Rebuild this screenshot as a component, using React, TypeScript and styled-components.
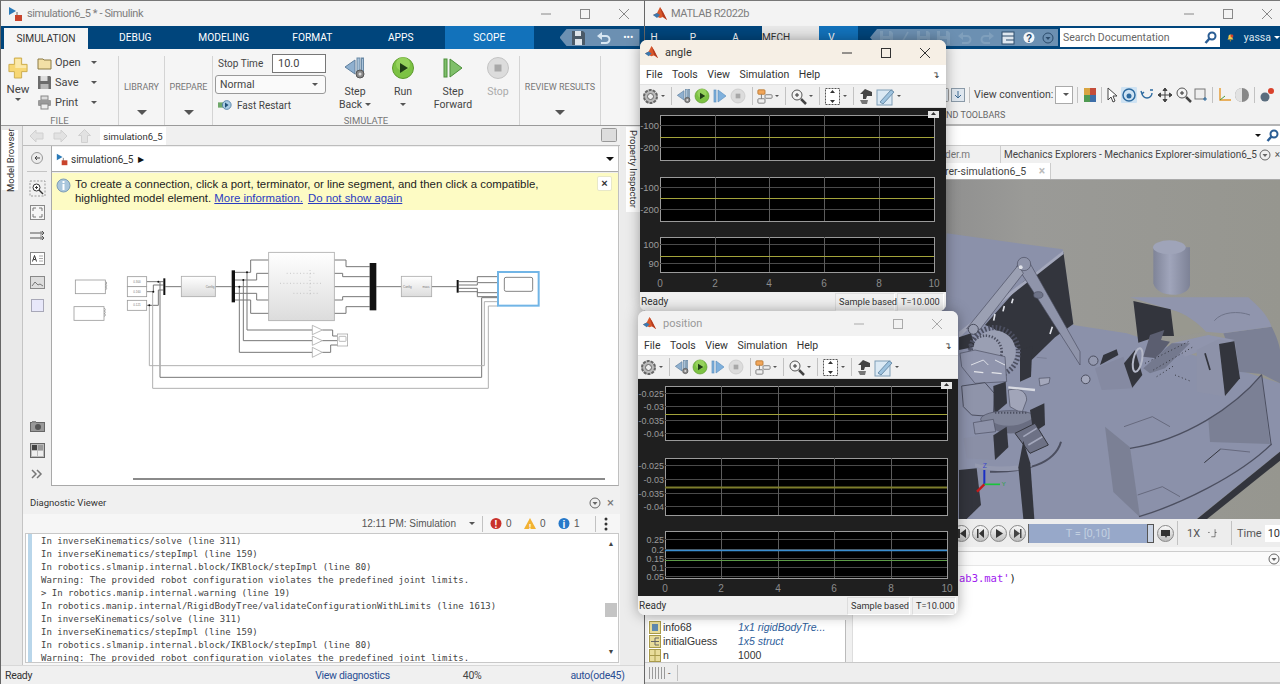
import * as React from 'react'
import styled, { createGlobalStyle } from 'styled-components'

const UI = `Roboto, "Noto Sans", "Liberation Sans", sans-serif`
const ARIAL = `"Liberation Sans", Arial, sans-serif`
const MONO = `"DejaVu Sans Mono", "Liberation Mono", monospace`

const GlobalStyle = createGlobalStyle`
  html, body { margin: 0; padding: 0; width: 1280px; height: 684px; overflow: hidden; background: #2a2a2a; }
  #root { width: 1280px; height: 684px; }
  * { box-sizing: border-box; }
`

const Desktop = styled.div`
  position: relative;
  width: 1280px;
  height: 684px;
  overflow: hidden;
  font-family: ${UI};
  color: #444;
`

const AppWindow = styled.div<{ $left: number; $width: number }>`
  position: absolute;
  top: 0;
  left: ${p => p.$left}px;
  width: ${p => p.$width}px;
  height: 684px;
  display: flex;
  flex-direction: column;
  background: #f0f0f0;
  border-left: 1px solid #666;
  border-top: 1px solid #777;
`

const TitleBar = styled.div<{ $padRight: number }>`
  height: 25px;
  flex: none;
  display: flex;
  align-items: center;
  gap: 3px;
  padding: 0 ${p => p.$padRight}px 0 7px;
  background: #f3f3f3;
  color: #7d7d7d;
  font-size: 11px;
  letter-spacing: -0.4px;
`

const TitleText = styled.span`
  flex: 1;
  white-space: nowrap;
`

const WinControls = styled.div<{ $gap: number; $color?: string }>`
  display: flex;
  align-items: center;
  gap: ${p => p.$gap}px;
  color: ${p => p.$color ?? '#888'};
`

const TabBar = styled.div<{ $padLeft: number }>`
  height: 23px;
  flex: none;
  display: flex;
  align-items: stretch;
  background: #00457c;
  padding-left: ${p => p.$padLeft}px;
`

const RibbonTab = styled.div<{ $kind?: 'active' | 'context' }>`
  width: ${p => (p.$kind === 'active' ? 84 : 88.5)}px;
  flex: none;
  display: flex;
  align-items: center;
  justify-content: center;
  font-size: 10.2px;
  margin-top: ${p => (p.$kind === 'active' ? 2 : 0)}px;
  margin-right: ${p => (p.$kind === 'active' ? 3 : 0)}px;
  color: ${p => (p.$kind === 'active' ? '#333' : '#fff')};
  background: ${p => (p.$kind === 'active' ? '#f5f5f5' : p.$kind === 'context' ? '#1272bb' : 'transparent')};
`

const QuickAccess = styled.div<{ $left: number; $width: number }>`
  margin-left: ${p => p.$left}px;
  width: ${p => p.$width}px;
  flex: none;
  margin-top: 3px;
  margin-bottom: 3px;
  padding-left: 6px;
  display: flex;
  align-items: center;
  justify-content: space-around;
  background: #6c90b2;
  clip-path: polygon(7px 0, 100% 0, 100% 100%, 7px 100%, 0 50%);
`

const Ribbon = styled.div`
  height: 77px;
  flex: none;
  display: flex;
  background: #f5f5f5;
  border-bottom: 1px solid #9a9a9a;
`

const RibbonSection = styled.div<{ $width: number }>`
  width: ${p => p.$width}px;
  flex: none;
  margin-top: 7px;
  display: flex;
  flex-direction: column;
  border-right: 1px solid #d4d4d4;
`

const SectionBody = styled.div`
  flex: 1;
  display: flex;
  min-height: 0;
`

const SectionLabel = styled.div`
  height: 13px;
  flex: none;
  text-align: center;
  font-size: 9.5px;
  color: #777;
  line-height: 17px;
`

const Collapsed = styled.div`
  flex: 1;
  display: flex;
  flex-direction: column;
  align-items: center;
  padding-top: 26px;
  gap: 18px;
  font-size: 9px;
  color: #777;
  white-space: nowrap;
`

const Caret = styled.span<{ $size?: number; $color?: string; $top?: number }>`
  display: inline-block;
  width: 0;
  height: 0;
  flex: none;
  margin-top: ${p => p.$top ?? 0}px;
  border-left: ${p => p.$size ?? 3}px solid transparent;
  border-right: ${p => p.$size ?? 3}px solid transparent;
  border-top: ${p => p.$size ?? 3}px solid ${p => p.$color ?? '#555'};
`

const NewButton = styled.div`
  width: 34px;
  display: flex;
  flex-direction: column;
  align-items: center;
  padding-top: 1px;
  font-size: 11.5px;
  gap: 2px;
`

const FileList = styled.div`
  width: 70px;
  margin: -2px 0 0 2px;
  display: flex;
  flex-direction: column;
  gap: 3px;
`

const FileRow = styled.div`
  height: 17px;
  display: flex;
  align-items: center;
  gap: 3px;
  font-size: 11px;
  span:nth-child(2) { width: 33px; }
`

const RunColumn = styled.div`
  width: 111px;
  margin: -2px 0 0 2px;
  display: flex;
  flex-direction: column;
  gap: 2px;
`

const StopTimeRow = styled.div`
  height: 19px;
  display: flex;
  align-items: center;
  padding-left: 3px;
  font-size: 10px;
  justify-content: space-between;
`

const StopInput = styled.div`
  width: 54px;
  height: 19px;
  border: 1px solid #777;
  background: #fff;
  padding-left: 5px;
  line-height: 17px;
  font-size: 11px;
`

const ModeSelect = styled.div`
  height: 19px;
  border: 1px solid #999;
  border-radius: 3px;
  background: #fafafa;
  display: flex;
  align-items: center;
  justify-content: space-between;
  padding: 0 7px 0 4px;
  font-size: 10.5px;
`

const FastRestart = styled.div`
  display: flex;
  align-items: center;
  gap: 5px;
  font-size: 10px;
  padding: 2px 0 0 3px;
`

const BigButton = styled.div<{ $width: number; $left?: number; $muted?: boolean }>`
  width: ${p => p.$width}px;
  margin-left: ${p => p.$left ?? 0}px;
  display: flex;
  flex-direction: column;
  align-items: center;
  font-size: 10.5px;
  line-height: 13px;
  text-align: center;
  color: ${p => (p.$muted ? '#aaa' : '#444')};
  svg { margin-bottom: 5px; }
`

const Inline = styled.span<{ $gap?: number }>`
  display: inline-flex;
  align-items: center;
  gap: ${p => p.$gap ?? 3}px;
`

const SimMain = styled.div`
  flex: 1;
  display: flex;
  min-height: 0;
`

const SideStrip = styled.div`
  width: 22px;
  flex: none;
  background: #e9e9e9;
  border-right: 1px solid #c4c4c4;
  padding: 4px 3px 0 1px;
`

const VerticalTab = styled.div<{ $width: number; $height: number; $flip?: boolean }>`
  width: ${p => p.$width}px;
  height: ${p => p.$height}px;
  background: #fff;
  display: flex;
  align-items: center;
  justify-content: center;
  font-size: 9.5px;
  writing-mode: vertical-rl;
  white-space: nowrap;
  color: #333;
  transform: ${p => (p.$flip ? 'rotate(180deg)' : 'none')};
`

const Center = styled.div`
  width: 597px;
  flex: none;
  display: flex;
  flex-direction: column;
`

const EditorTabs = styled.div`
  height: 20px;
  flex: none;
  display: flex;
  align-items: flex-end;
  background: #f0f0f0;
  padding-left: 6px;
  gap: 9px;
  border-bottom: 1px solid #bdbdbd;
  svg { margin-bottom: 2px; }
`

const EditorTab = styled.div`
  width: 66px;
  height: 18px;
  background: #fff;
  font-size: 9.5px;
  text-align: center;
  line-height: 20px;
  color: #333;
  margin: 0 auto 0 -1px;
`

const KeyboardSlot = styled.span`
  width: 3px;
  margin-left: -9px;
`

const EditorRow = styled.div`
  flex: 1;
  display: flex;
  min-height: 0;
`

const Palette = styled.div`
  width: 28px;
  flex: none;
  display: flex;
  flex-direction: column;
  align-items: center;
  padding-top: 5px;
  background: #f0f0f0;
`

const PaletteGroup = styled.div`
  display: grid;
  grid-auto-rows: 23.4px;
  align-items: center;
  justify-items: center;
  padding-top: 5px;
  margin-top: 6px;
  border-top: 1px solid #c4c4c4;
  width: 20px;
`

const PaletteBottom = styled.div`
  margin-top: auto;
  display: grid;
  grid-auto-rows: 24px;
  align-items: center;
  justify-items: center;
`

const EditorColumn = styled.div`
  width: 568px;
  flex: none;
  display: flex;
  flex-direction: column;
  border-left: 1px solid #a9a9a9;
  border-bottom: 1px solid #a9a9a9;
  border-right: 1px solid #c0c0c0;
`

const AddressBar = styled.div`
  height: 25px;
  margin-top: 1px;
  flex: none;
  display: flex;
  align-items: center;
  background: #fff;
  padding: 0 4px 0 4px;
  gap: 2px;
  font-size: 10px;
  color: #333;
  border-bottom: 1px solid #aaa;
`

const AddressArrow = styled.span`
  font-size: 8px;
  margin-left: 3px;
  margin-right: auto;
  color: #111;
`

const Hint = styled.div`
  height: 38px;
  flex: none;
  display: flex;
  background: #fdfbc4;
  border-top: 1px solid #eee;
  padding: 5px 6px 0 4px;
  font-family: ${ARIAL};
  font-size: 11.4px;
  line-height: 13.5px;
  color: #222;
`

const HintBody = styled.div`
  flex: 1;
  padding-left: 4px;
  white-space: nowrap;
`

const HintLink = styled.span`
  color: #2a3cc0;
  text-decoration: underline;
  margin-right: 5px;
`

const CloseBox = styled.div`
  width: 15px;
  height: 15px;
  margin-top: -2px;
  background: #fff;
  border: 1px solid #e8e8c8;
  border-radius: 2px;
  font-size: 11px;
  line-height: 13px;
  text-align: center;
  font-weight: bold;
  color: #333;
`

const CanvasArea = styled.div`
  flex: 1;
  display: flex;
  flex-direction: column;
  background: #fff;
  padding-top: 20px;
  svg { display: block; flex: none; margin-left: -2px; }
`

const CanvasScroll = styled.div`
  margin: auto 13px 5px 81px;
  height: 2px;
  background: #8a8a8a;
`

const Diagnostic = styled.div`
  height: 179px;
  flex: none;
  display: flex;
  flex-direction: column;
  background: #f7f7f7;
`

const DiagHeader = styled.div`
  height: 28px;
  flex: none;
  display: flex;
  align-items: center;
  justify-content: space-between;
  padding: 5px 6px 0 7px;
  font-size: 9.5px;
  color: #333;
  background: #f0f0f0;
`

const DiagTools = styled.div`
  height: 19px;
  flex: none;
  display: flex;
  align-items: center;
  justify-content: flex-end;
  gap: 4px;
  font-size: 10px;
  color: #555;
  padding-right: 11px;
  background: #f6f6f6;
  font-family: ${ARIAL};
`

const ToolDivider = styled.span<{ $height?: number; $margin?: number }>`
  width: 1px;
  height: ${p => p.$height ?? 16}px;
  flex: none;
  background: #c2c2c2;
  margin: 0 ${p => p.$margin ?? 3}px;
`

const Count = styled.span`
  width: 14px;
`

const DismissGlyph = styled.span`
  font-size: 13px;
  color: #777;
`

const LogBox = styled.div`
  height: 130px;
  flex: none;
  display: flex;
  margin: 0 1px 0 2px;
  background: #fff;
  border: 1px solid #c8c8c8;
  overflow: hidden;
`

const LogStripe = styled.div`
  width: 4px;
  flex: none;
  margin-left: 2px;
  background: #b9d6ea;
`

const LogLines = styled.div`
  flex: 1;
  padding: 0 0 0 9px;
  margin-top: 1px;
  font-family: ${MONO};
  font-size: 9px;
  line-height: 13px;
  color: #444;
  white-space: pre;
`

const LogScroll = styled.div`
  width: 14px;
  flex: none;
  display: flex;
  flex-direction: column;
  align-items: center;
  padding: 6px 0;
  font-size: 7px;
  color: #444;
`

const LogThumb = styled.div`
  width: 12px;
  height: 14px;
  flex: none;
  margin: 55px 0 auto;
  background: #c4c4c4;
`

const PropertyStrip = styled.div`
  flex: 1;
  padding: 1px 0 0 6px;
  background: #ececec;
`

const StatusBar = styled.div`
  height: 19px;
  flex: none;
  display: flex;
  align-items: center;
  font-size: 10.5px;
  letter-spacing: -0.3px;
  color: #333;
  padding-left: 4px;
  background: #f0f0f0;
  border-top: 1px solid #d8d8d8;
`

const StatusItem = styled.span<{ $left: number; $link?: boolean }>`
  margin-left: ${p => p.$left}px;
  color: ${p => (p.$link ? '#2b4f94' : '#444')};
  white-space: nowrap;
`

/* MATLAB desktop */

const MatTab = styled.div<{ $width: number; $inset?: number; $kind?: 'active' | 'context' }>`
  width: ${p => p.$width}px;
  flex: none;
  padding-right: ${p => p.$inset ?? 0}px;
  font-size: 10px;
  display: flex;
  align-items: center;
  justify-content: ${p => (p.$kind === 'active' ? 'flex-start' : 'center')};
  color: ${p => (p.$kind === 'active' ? '#333' : '#fff')};
  background: ${p => (p.$kind === 'active' ? '#e8e8e8' : p.$kind === 'context' ? '#1272bb' : 'transparent')};
`

const SearchBox = styled.div`
  width: 160px;
  height: 19px;
  flex: none;
  margin: 2px 0 0 2px;
  background: #fff;
  display: flex;
  align-items: center;
  justify-content: space-between;
  padding: 0 3px;
  font-size: 10.5px;
  color: #666;
`

const UserArea = styled.div`
  flex: 1;
  display: flex;
  align-items: center;
  gap: 10px;
  padding-left: 7px;
  color: #dfe7ef;
  font-size: 10.5px;
  white-space: nowrap;
  overflow: hidden;
`

const MatRibbon = styled.div`
  height: 77px;
  flex: none;
  background: #f2f2f2;
  border-bottom: 2px solid #b5b5b5;
  padding: 36px 0 0 290px;
  display: flex;
  flex-direction: column;
`

const ViewRow = styled.div`
  height: 19px;
  display: flex;
  align-items: center;
  gap: 2px;
  font-size: 10.5px;
  color: #444;
  white-space: nowrap;
`

const ViewSelect = styled.div`
  width: 18px;
  height: 18px;
  flex: none;
  background: #fff;
  border: 1px solid #aaa;
  display: flex;
  align-items: center;
  justify-content: flex-end;
  padding-right: 3px;
`

const ToolbarsLabel = styled.div`
  margin: 6px 0 0 11px;
  font-size: 9px;
  color: #666;
`

const PathRow = styled.div`
  height: 20px;
  flex: none;
  display: flex;
  align-items: center;
  justify-content: flex-end;
  gap: 5px;
  padding-right: 1px;
  background: #fff;
  border-bottom: 1px solid #ccc;
`

const DocTabs = styled.div`
  height: 17px;
  flex: none;
  display: flex;
  align-items: center;
  background: #f0f0f0;
  font-size: 10px;
  color: #555;
  padding-left: 300px;
  white-space: nowrap;
`

const DocName = styled.span`
  width: 56px;
  flex: none;
  height: 17px;
  line-height: 17px;
  border-right: 1px solid #ccc;
  color: #777;
`

const DocTitle = styled.span`
  padding-left: 3px;
  flex: 1;
  color: #444;
`

const DocClose = styled.span`
  margin-left: 4px;
`

const ExplorerTabs = styled.div`
  height: 17px;
  flex: none;
  display: flex;
  padding-left: 300px;
  background: #f0f0f0;
  border-bottom: 1px solid #aaa;
  font-size: 10.5px;
  color: #444;
`

const ExplorerTab = styled.div`
  width: 106px;
  background: #fff;
  border-right: 1px solid #ccc;
  display: flex;
  align-items: center;
  justify-content: space-between;
  padding-right: 5px;
  white-space: nowrap;
  span { color: #bbb; font-size: 12px; font-weight: bold; }
`

const Scene = styled.div`
  height: 339px;
  flex: none;
  background: #979797;
  svg { display: block; }
`

const PlayBar = styled.div`
  height: 28px;
  flex: none;
  display: flex;
  align-items: center;
  padding-left: 308px;
  background: #ededed;
  font-size: 11px;
  color: #555;
  white-space: nowrap;
`

const RoundBtn = styled.div<{ $after?: number }>`
  width: 17px;
  height: 17px;
  flex: none;
  margin-right: ${p => p.$after ?? 1.5}px;
  border-radius: 50%;
  background: linear-gradient(#fafafa, #bdbdbd);
  border: 1px solid #888;
  display: flex;
  align-items: center;
  justify-content: center;
`

const TimeSlider = styled.div`
  width: 126px;
  height: 19px;
  margin: 0 3px 0 1px;
  flex: none;
  display: flex;
  background: #97a8c9;
  border-left: 1px solid #666;
  color: #c2cfe0;
  font-size: 11px;
  line-height: 19px;
`

const SliderLabel = styled.span`
  flex: 1;
  text-align: center;
`

const SliderHandle = styled.span`
  width: 7px;
  background: #c9d3e4;
  border: 1px solid #555;
`

const RateLabel = styled.span`
  margin-left: 6px;
`

const RateGlyph = styled.svg`
  margin: 0 9px 0 7px;
`

const TimeLabel = styled.span`
  margin-left: 2px;
`

const TimeInput = styled.div`
  flex: 1;
  height: 17px;
  margin-left: 3px;
  background: #fff;
  padding-left: 3px;
  line-height: 17px;
  color: #333;
`

const LowerRow = styled.div`
  flex: 1;
  display: flex;
  min-height: 0;
  border-top: 4px solid #f7f7f7;
`

const Workspace = styled.div`
  width: 205px;
  flex: none;
  padding: 69px 0 0 3px;
  background: #f0f0f0;
  display: flex;
  flex-direction: column;
`

const VarTable = styled.div`
  flex: 1;
  width: 198px;
  background: #fff;
  border-bottom: 1px solid #999;
  border-right: 1px solid #bbb;
`

const VarRow = styled.div`
  height: 14px;
  display: flex;
  align-items: center;
  font-family: ${ARIAL};
  font-size: 10.5px;
  color: #333;
  padding-left: 1px;
  gap: 2px;
`

const VarName = styled.span`
  width: 73px;
  white-space: nowrap;
`

const VarValue = styled.span<{ $struct?: boolean }>`
  color: ${p => (p.$struct ? '#2d5d9a' : '#333')};
  font-style: ${p => (p.$struct ? 'italic' : 'normal')};
  white-space: nowrap;
`

const CommandPane = styled.div`
  flex: 1;
  display: flex;
  flex-direction: column;
  border-left: 1px solid #ddd;
  margin-left: 2px;
`

const CommandHead = styled.div`
  height: 15px;
  flex: none;
  display: flex;
  justify-content: flex-end;
  align-items: center;
  background: #fafafa;
  border-top: 1px solid #ccc;
  border-bottom: 1px solid #e6e6e6;
`

const CommandText = styled.div`
  flex: 1;
  background: #fff;
  padding: 6px 0 0 106px;
  font-family: ${MONO};
  font-size: 10.5px;
  color: #222;
  white-space: pre;
  em { color: #a020f0; font-style: normal; }
`

const MatStatus = styled.div`
  height: 22px;
  flex: none;
  display: flex;
  align-items: center;
  gap: 3px;
  padding-left: 4px;
  background: #eeeeee;
  border-top: 1px solid #c9c9c9;
  border-bottom: 2px solid #c9c9c9;
  font-size: 9px;
`

const Bars = styled.span`
  width: 16px;
  height: 12px;
  background: repeating-linear-gradient(90deg, #9a9a9a 0 1px, transparent 1px 3px);
`

/* Scope windows */

const ScopeWindow = styled.div<{ $left: number; $top: number; $width: number }>`
  position: absolute;
  left: ${p => p.$left}px;
  top: ${p => p.$top}px;
  width: ${p => p.$width}px;
  display: flex;
  flex-direction: column;
  border-radius: 7px;
  overflow: hidden;
  background: #f0f0f0;
  box-shadow: 0 0 14px rgba(0, 0, 0, 0.35);
`

const ScopeTitle = styled.div<{ $active: boolean }>`
  height: 25px;
  flex: none;
  display: flex;
  align-items: center;
  gap: 6px;
  padding: 0 15px 0 4px;
  background: ${p => (p.$active ? '#f6efe5' : '#f2f2f2')};
  color: ${p => (p.$active ? '#333' : '#999')};
  font-size: 11px;
`

const ScopeMenu = styled.div`
  height: 20px;
  flex: none;
  display: flex;
  align-items: center;
  gap: 9.5px;
  padding: 0 6px;
  background: #fff;
  font-size: 10.5px;
  color: #333;
  border-bottom: 1px solid #e2e2e2;
`

const MenuSpacer = styled.span`
  margin-left: auto;
  font-size: 9px;
`

const ScopeTools = styled.div`
  height: 23px;
  flex: none;
  display: flex;
  align-items: center;
  gap: 2px;
  padding: 0 2px;
  background: #f0f0f0;
  border-bottom: 1px solid #ddd;
`

const ScopeDivider = styled.span`
  width: 1px;
  height: 18px;
  flex: none;
  margin: 0 2px 0 4px;
  background: #c2c2c2;
`

const ScopeStatus = styled.div`
  height: 19px;
  flex: none;
  display: flex;
  align-items: center;
  gap: 2px;
  font-size: 9.2px;
  color: #333;
  padding: 0 2px 0 1px;
  background: #f0f0f0;
  white-space: nowrap;
`

const StatusLabel = styled.span`
  flex: 1;
  font-size: 10px;
`

const StatusCell = styled.span<{ $width: number }>`
  width: ${p => p.$width}px;
  flex: none;
  border: 1px solid #ddd;
  border-right-color: #fff;
  border-bottom-color: #fff;
  padding-left: 3px;
  line-height: 16px;
`

const ChartSvg = styled.svg`
  display: block;
  flex: none;
`

const NewLabel = styled.span`
  margin-top: 1px;
`

const DotsGlyph = styled.span`
  color: #fff;
  font-size: 10px;
`

const TimeSpacer = styled.span`
  width: 5px;
`

/* drawings */

const Minimize = () => (
  <svg width="12" height="12" viewBox="0 0 12 12"><path d="M1 6h10" stroke="currentColor" strokeWidth="1" /></svg>
)
const Maximize = () => (
  <svg width="12" height="12" viewBox="0 0 12 12"><rect x="1.5" y="1.5" width="9" height="9" fill="none" stroke="currentColor" /></svg>
)
const CloseX = () => (
  <svg width="12" height="12" viewBox="0 0 12 12"><path d="M1 1l10 10M11 1L1 11" stroke="currentColor" /></svg>
)

const SimulinkLogo = ({ size = 16 }: { size?: number }) => (
  <svg width={size} height={size} viewBox="0 0 16 16">
    <path d="M1 1l7 4-7 4z" fill="#2a7ab8" />
    <path d="M9 6v4" stroke="#666" />
    <rect x="7" y="9" width="7" height="6" fill="#c9442c" />
  </svg>
)

const MatlabLogo = ({ size = 16 }: { size?: number }) => (
  <svg width={size} height={size} viewBox="0 0 16 16">
    <path d="M1 9l4-2 3-6 3 5 4 8-4-3-3 1z" fill="#d9582b" />
    <path d="M1 9l4-2 3 2-3 3z" fill="#3b78ae" />
    <path d="M8 1l3 5 4 8-4-3z" fill="#b33a1f" />
  </svg>
)

const PlusIcon = () => (
  <svg width="20" height="22" viewBox="0 0 22 24">
    <path d="M7 1h8v7h6v8h-6v7H7v-7H1V8h6z" fill="#f7d774" stroke="#c9a94a" />
    <path d="M8 2h6v7h6v3H8z" fill="#fbe9ab" />
  </svg>
)

const FolderIcon = () => (
  <svg width="15" height="14" viewBox="0 0 15 14">
    <path d="M1 3h5l1 1h7v9H1z" fill="#f2dfa6" stroke="#8c7a44" />
  </svg>
)
const SaveIcon = () => (
  <svg width="15" height="15" viewBox="0 0 15 15">
    <path d="M1 1h12l1 1v12H1z" fill="#6c6c6c" />
    <rect x="3.5" y="1" width="7" height="5" fill="#ddd" />
    <rect x="3.5" y="9" width="8" height="5" fill="#b8b8b8" />
  </svg>
)
const PrintIcon = () => (
  <svg width="15" height="15" viewBox="0 0 15 15">
    <rect x="4" y="1" width="7" height="4" fill="#ddd" stroke="#888" />
    <rect x="1" y="5" width="13" height="6" rx="1" fill="#9a9a9a" />
    <rect x="4" y="9" width="7" height="5" fill="#eee" stroke="#888" />
  </svg>
)

const StepBackIcon = ({ size = 24 }: { size?: number }) => (
  <svg width={size} height={size} viewBox="0 0 24 24">
    <path d="M12 4v14L2 11z" fill="#8fb0cf" stroke="#5e7f9e" />
    <rect x="14" y="2" width="3" height="16" fill="#a8c2d9" stroke="#6b8aa6" />
    <rect x="18.5" y="2" width="2" height="16" fill="#a8c2d9" stroke="#6b8aa6" />
    <circle cx="17" cy="18" r="4" fill="#888" stroke="#555" />
    <circle cx="17" cy="18" r="1.5" fill="#ddd" />
  </svg>
)

const PlayGreen = ({ size = 24 }: { size?: number }) => (
  <svg width={size} height={size} viewBox="0 0 24 24">
    <circle cx="12" cy="12" r="10.5" fill="#7cc243" stroke="#5c9a2c" />
    <circle cx="12" cy="8" r="7" fill="#a6dc6c" opacity="0.6" />
    <path d="M9 7l8 5-8 5z" fill="#1f3d16" />
  </svg>
)

const StepFwdIcon = ({ size = 24, color = '#7fbf6a', edge = '#4c8f3a' }: { size?: number; color?: string; edge?: string }) => (
  <svg width={size} height={size} viewBox="0 0 24 24">
    <rect x="3" y="3" width="3" height="18" fill={color} stroke={edge} />
    <path d="M9 3l12 9-12 9z" fill={color} stroke={edge} />
  </svg>
)

const StopIcon = ({ size = 24 }: { size?: number }) => (
  <svg width={size} height={size} viewBox="0 0 24 24">
    <circle cx="12" cy="12" r="10.5" fill="#dcdcdc" stroke="#c4c4c4" />
    <rect x="8.5" y="8.5" width="7" height="7" fill="#a8a8a8" />
  </svg>
)

const RestartIcon = () => (
  <svg width="14" height="14" viewBox="0 0 16 14">
    <rect x="0" y="4" width="7" height="6" fill="#6fa86a" />
    <circle cx="10" cy="7" r="5" fill="#a9cbe3" stroke="#4f7ea5" />
    <path d="M8 4l4 3-4 3z" fill="#1e4f78" />
  </svg>
)

const NavArrow = ({ dir }: { dir: 'left' | 'right' | 'up' }) => {
  const rot = dir === 'left' ? 0 : dir === 'right' ? 180 : 90
  return (
    <svg width="15" height="14" viewBox="0 0 15 14">
      <path d="M1 7l6-6v3h7v6H7v3z" fill="#e2e2e2" stroke="#d0d0d0" transform={`rotate(${rot} 7.5 7)`} />
    </svg>
  )
}

const CircleBack = () => (
  <svg width="14" height="14" viewBox="0 0 14 14">
    <circle cx="7" cy="7" r="5.5" fill="#ececec" stroke="#999" />
    <path d="M10 7H5M7 5L5 7l2 2" stroke="#444" fill="none" />
  </svg>
)

const InfoIcon = () => (
  <svg width="15" height="15" viewBox="0 0 15 15">
    <circle cx="7.5" cy="7.5" r="6.5" fill="#a9c6dc" stroke="#7d9db6" />
    <rect x="6.5" y="6" width="2" height="6" fill="#fff" />
    <rect x="6.5" y="3" width="2" height="2" fill="#fff" />
  </svg>
)

const PalZoom = () => (
  <svg width="17" height="17" viewBox="0 0 17 17">
    <rect x="1" y="1" width="15" height="15" fill="none" stroke="#999" strokeDasharray="2 1.5" />
    <circle cx="7.5" cy="7.5" r="3.5" fill="#fff" stroke="#333" />
    <path d="M10 10l4 4" stroke="#333" strokeWidth="1.5" />
    <path d="M6 7.5h3M7.5 6v3" stroke="#333" />
  </svg>
)
const PalFit = () => (
  <svg width="15" height="15" viewBox="0 0 15 15">
    <rect x="0.5" y="0.5" width="14" height="14" fill="#f5f5f5" stroke="#888" />
    <path d="M3 6V3h3M12 6V3H9M3 9v3h3M12 9v3H9" fill="none" stroke="#777" />
  </svg>
)
const PalRoute = () => (
  <svg width="15" height="11" viewBox="0 0 15 11">
    <path d="M0 3h13M0 8h13" stroke="#555" />
    <path d="M11 1v9" stroke="#888" />
    <path d="M12 1l2 2-2 2M12 6l2 2-2 2" fill="none" stroke="#555" />
  </svg>
)
const PalText = () => (
  <svg width="15" height="13" viewBox="0 0 15 13">
    <rect x="0.5" y="0.5" width="14" height="12" fill="#fff" stroke="#888" />
    <path d="M2.5 9.5l2-6 2 6M3.5 7.5h2" fill="none" stroke="#333" />
    <path d="M9 4h4M9 6.5h4M9 9h4" stroke="#aaa" />
  </svg>
)
const PalImage = () => (
  <svg width="15" height="13" viewBox="0 0 15 13">
    <rect x="0.5" y="0.5" width="14" height="12" fill="#ddd" stroke="#888" />
    <path d="M2 10l3-4 3 3 2-1 3 2" fill="none" stroke="#777" />
  </svg>
)
const PalBox = () => (
  <svg width="13" height="13" viewBox="0 0 13 13">
    <rect x="0.5" y="0.5" width="12" height="12" fill="#e8e8fa" stroke="#a8a8b8" />
  </svg>
)
const PalCamera = () => (
  <svg width="15" height="12" viewBox="0 0 15 12">
    <rect x="0.5" y="2.5" width="14" height="9" fill="#999" stroke="#666" />
    <circle cx="8" cy="7" r="3" fill="#555" />
    <rect x="2" y="1" width="4" height="2" fill="#888" />
  </svg>
)
const PalTable = () => (
  <svg width="15" height="15" viewBox="0 0 15 15">
    <rect x="0.5" y="0.5" width="14" height="14" fill="#bbb" stroke="#666" />
    <rect x="2" y="2" width="5" height="5" fill="#444" />
    <rect x="8" y="8" width="5" height="5" fill="#eee" />
    <rect x="2" y="8" width="5" height="5" fill="#eee" />
    <rect x="8" y="2" width="5" height="5" fill="#999" />
  </svg>
)
const PalMore = () => (
  <svg width="12" height="10" viewBox="0 0 12 10">
    <path d="M1 1l4 4-4 4M6 1l4 4-4 4" fill="none" stroke="#777" strokeWidth="1.5" />
  </svg>
)

const CircleDown = ({ color = '#666' }: { color?: string }) => (
  <svg width="12" height="12" viewBox="0 0 12 12">
    <circle cx="6" cy="6" r="5" fill="none" stroke={color} />
    <path d="M3.5 5h5L6 8z" fill={color} />
  </svg>
)

const Badge = ({ fill, glyph, ink = '#fff' }: { fill: string; glyph: string; ink?: string }) => (
  <svg width="12" height="13" viewBox="0 0 12 13">
    <circle cx="6" cy="6.5" r="5.5" fill={fill} />
    <text x="6" y="10.5" textAnchor="middle" fontSize="10" fontWeight="bold" fontFamily={ARIAL} fill={ink}>{glyph}</text>
  </svg>
)

const WarnBadge = () => (
  <svg width="12" height="13" viewBox="0 0 12 13">
    <path d="M6 1l6 11H0z" fill="#f2b233" />
    <text x="6" y="11.5" textAnchor="middle" fontSize="8" fontWeight="bold" fontFamily={ARIAL} fill="#fff">!</text>
  </svg>
)

const KebabIcon = () => (
  <svg width="6" height="14" viewBox="0 0 6 14">
    <circle cx="3" cy="2" r="1.5" fill="#333" />
    <circle cx="3" cy="7" r="1.5" fill="#333" />
    <circle cx="3" cy="12" r="1.5" fill="#333" />
  </svg>
)

const QuickSave = ({ color = '#4a5a68', paper = '#dde4ea' }: { color?: string; paper?: string }) => (
  <svg width="13" height="14" viewBox="0 0 13 14">
    <path d="M0 0h11l2 2v12H0z" fill={color} />
    <rect x="3" y="0" width="6" height="5" fill={paper} />
    <rect x="3" y="8" width="7" height="6" fill={paper} />
  </svg>
)

const QuickUndo = ({ color = '#d7e6f2', flip }: { color?: string; flip?: boolean }) => (
  <svg width="14" height="12" viewBox="0 0 14 12">
    <g transform={flip ? 'matrix(-1 0 0 1 14 0)' : undefined}>
      <path d="M2 4h7a3.5 3.5 0 010 7H4" fill="none" stroke={color} strokeWidth="2" />
      <path d="M5 0L0 4l5 4z" fill={color} />
    </g>
  </svg>
)

const QuickCut = () => (
  <svg width="9" height="14" viewBox="0 0 9 14"><path d="M8 1L1 13" stroke="#7f9fbc" strokeWidth="1.5" /></svg>
)

const QuickStack = () => (
  <svg width="14" height="14" viewBox="0 0 14 14">
    <rect x="1" y="1" width="12" height="12" fill="#dfe7ef" stroke="#2c4c6c" />
    <path d="M1 5h12M5 9h8" stroke="#2c4c6c" />
  </svg>
)

const Glass = ({ color = '#2a5d94' }: { color?: string }) => (
  <svg width="13" height="13" viewBox="0 0 13 13">
    <circle cx="8" cy="5" r="3.5" fill="none" stroke={color} strokeWidth="2" />
    <path d="M5.5 7.5L1.5 12" stroke={color} strokeWidth="2.5" />
  </svg>
)

const Bell = () => (
  <svg width="14" height="16" viewBox="0 0 14 16">
    <path d="M7 1c3 0 4 2 4 5 0 3 1 4 2 5H1c1-1 2-2 2-5 0-3 1-5 4-5z" fill="#f2c94c" />
    <circle cx="10" cy="4" r="3" fill="#d9412b" />
    <circle cx="7" cy="13.5" r="1.5" fill="#a8843a" />
  </svg>
)

const ScopeGear = () => (
  <svg width="17" height="17" viewBox="0 0 17 17">
    <circle cx="8.5" cy="8.5" r="6.5" fill="#bbb" stroke="#666" strokeWidth="2" strokeDasharray="3 1" />
    <circle cx="8.5" cy="8.5" r="3" fill="#eee" stroke="#666" />
  </svg>
)

const BlocksIcon = () => (
  <svg width="16" height="17" viewBox="0 0 18 17">
    <rect x="1" y="1" width="8" height="5" rx="1" fill="#f2a65a" stroke="#b87a35" />
    <rect x="9" y="6.5" width="8" height="4" rx="1" fill="#eee" stroke="#777" />
    <rect x="1" y="11" width="8" height="5" rx="1" fill="#eee" stroke="#777" />
    <path d="M5 6v5" stroke="#777" />
  </svg>
)

const ZoomIcon = () => (
  <svg width="17" height="17" viewBox="0 0 17 17">
    <circle cx="7" cy="7" r="5" fill="#f4f4f4" stroke="#555" />
    <path d="M5 7h4M7 5v4" stroke="#333" />
    <path d="M11 11l5 5" stroke="#444" strokeWidth="2.5" />
  </svg>
)

const FitIcon = () => (
  <svg width="17" height="19" viewBox="0 0 17 19">
    <rect x="1.5" y="1.5" width="14" height="16" fill="#fff" stroke="#555" strokeDasharray="2 1" />
    <path d="M8.5 3l2.5 3h-5zM8.5 16l2.5-3h-5z" fill="#333" />
  </svg>
)

const StyleIcon = () => (
  <svg width="16" height="17" viewBox="0 0 16 17">
    <path d="M7 1l7 3v4H9l-1 3H5V6H2z" fill="#444" />
    <path d="M2 12h8l-1 4H4z" fill="#777" />
  </svg>
)

const EditIcon = () => (
  <svg width="19" height="19" viewBox="0 0 19 19">
    <rect x="1" y="3" width="15" height="15" fill="#dbe9f4" stroke="#7f9db6" />
    <path d="M4 15L15 3l3 2L7 17z" fill="#9ec3df" stroke="#6c8fab" />
  </svg>
)

const MiniCircleBtn = ({ d, fill = '#333' }: { d: string; fill?: string }) => (
  <svg width="11" height="11" viewBox="0 0 11 11"><path d={d} fill={fill} /></svg>
)

const ToolDot = ({ color, width = 14 }: { color: string; width?: number }) => (
  <svg width={width} height="16" viewBox={`0 0 ${width} 16`}>
    <rect x="0.5" y="1.5" width={width - 1} height="13" rx="1" fill={color} stroke="#999" />
  </svg>
)

const ViewDownIcon = () => (
  <svg width="14" height="16" viewBox="0 0 14 16">
    <rect x="0.5" y="1.5" width="13" height="13" fill="#dfe7ef" stroke="#8a9aa8" />
    <path d="M7 4v7M4 8l3 3 3-3" stroke="#3c6a94" fill="none" />
  </svg>
)

const CubeIcon = () => (
  <svg width="16" height="16" viewBox="0 0 16 16">
    <rect x="2" y="1" width="6" height="7" fill="#d9a441" />
    <rect x="8" y="1" width="6" height="7" fill="#c44d3a" />
    <rect x="2" y="8" width="6" height="7" fill="#4f9a52" />
    <rect x="8" y="8" width="6" height="7" fill="#3d6ea8" />
  </svg>
)

const PointerIcon = () => (
  <svg width="14" height="16" viewBox="0 0 14 16"><path d="M3 1v12l3-3 2 5 2-1-2-5h4z" fill="#fff" stroke="#444" /></svg>
)
const OrbitIcon = () => (
  <svg width="16" height="16" viewBox="0 0 16 16">
    <rect x="0" y="0" width="16" height="16" rx="1" fill="#cfe3f3" />
    <ellipse cx="8" cy="8" rx="6" ry="6" fill="none" stroke="#2d6a9f" strokeWidth="1.5" />
    <circle cx="8" cy="9" r="2.5" fill="#2d6a9f" />
  </svg>
)
const HandIcon = () => (
  <svg width="16" height="16" viewBox="0 0 16 16">
    <path d="M3 6a5 5 0 1010 0M2 4l1 3 2-2M11 3h3" fill="none" stroke="#2d6a9f" strokeWidth="1.4" />
  </svg>
)
const MoveIcon = () => (
  <svg width="16" height="16" viewBox="0 0 16 16">
    <path d="M8 1v14M1 8h14M8 1L6 3.5h4zM8 15l-2-2.5h4zM1 8l2.5-2v4zM15 8l-2.5-2v4z" stroke="#444" fill="#444" />
  </svg>
)
const ViewBoxIcon = () => (
  <svg width="14" height="14" viewBox="0 0 14 14"><rect x="1" y="1" width="10" height="10" fill="#eee" stroke="#777" /><path d="M11 9v4M9 11h4" stroke="#2d6a9f" /></svg>
)
const AxesIcon = () => (
  <svg width="15" height="15" viewBox="0 0 15 15"><path d="M3 1v12h11" fill="none" stroke="#e69a2e" strokeWidth="1.4" /><path d="M3 13l5-4" stroke="#4b9c3c" /></svg>
)
const SphereIcon = () => (
  <svg width="16" height="16" viewBox="0 0 16 16"><circle cx="8" cy="8" r="7" fill="#888" /><path d="M8 1a7 7 0 000 14z" fill="#e2e2e2" /></svg>
)
const RobotIcon = () => (
  <svg width="16" height="16" viewBox="0 0 16 16"><circle cx="6" cy="10" r="4.5" fill="#5a6d7e" /><circle cx="12" cy="4" r="3" fill="#d9412b" /></svg>
)

const VarIcon = ({ kind }: { kind: 'box' | 'struct' | 'grid' }) => (
  <svg width="12" height="13" viewBox="0 0 12 13">
    <rect x="0.5" y="0.5" width="11" height="12" fill="#e8dc9a" stroke="#a89a4a" />
    {kind === 'box' && <rect x="3" y="3" width="6" height="7" fill="#5f89b0" />}
    {kind === 'struct' && <path d="M2 6.5h4M6 3h4M6 6.5h4M6 10h4M6 3v7" stroke="#666" fill="none" />}
    {kind === 'grid' && <path d="M6 1v11M1 6.5h10" stroke="#a89a4a" />}
  </svg>
)

/* Simulink block diagram, in 3x coordinates of the canvas */
const BlockDiagram = () => {
  const wires = [
    'M290 155H340', 'M290 185H310V165H340', 'M290 226H325V180H340', 'M346 170H394',
    'M496 170H545', 'M555 127H602V90H656', 'M555 150H620V130H656', 'M555 170H656',
    'M555 190H620V210H656', 'M555 210H602V250H656',
    'M853 90H888V110H959', 'M853 130H878V140H959', 'M853 170H959', 'M853 210H878V200H959', 'M853 250H888V230H959',
    'M979 170H1054', 'M1145 170H1220', 'M1226 155H1282V140H1343', 'M1226 165H1282V158H1343',
    'M1226 175H1282V188H1343', 'M1226 185H1282V200H1343',
    'M591 127V300H787', 'M580 150V332H787', 'M568 170V367H787',
    'M817 300H848V318H862', 'M817 332H862', 'M817 367H842V345H862',
  ]
  const greyLoop = ['M298 226V407H1303V215H1343', 'M308 185V475H1315V228H1343']
  const darkLoop = 'M330 155V442H1295V203H1343'
  return (
    <svg width="510" height="180" viewBox="0 0 1530 540">
      <defs>
        <linearGradient id="blockFill" x1="0" y1="0" x2="0" y2="1">
          <stop offset="0" stopColor="#fff" />
          <stop offset="1" stopColor="#dcdcdc" />
        </linearGradient>
      </defs>
      <g fill="none" stroke="#777" strokeWidth="3">
        {wires.map(d => <path key={d} d={d} />)}
        <path d={darkLoop} />
      </g>
      <g fill="none" stroke="#b0b0b0" strokeWidth="3">
        {greyLoop.map(d => <path key={d} d={d} />)}
      </g>
      <g fill="#fff" stroke="#999" strokeWidth="2.4">
        <rect x="76" y="150" width="90" height="41" />
        <rect x="72" y="230" width="90" height="41" />
        <rect x="232" y="140" width="58" height="30" />
        <rect x="232" y="170" width="58" height="30" />
        <rect x="232" y="211" width="58" height="30" />
        <path d="M166 155a4 4 0 010 8a4 4 0 010 8a4 4 0 010 8" fill="none" />
        <path d="M162 235a4 4 0 010 8a4 4 0 010 8a4 4 0 010 8" fill="none" />
      </g>
      <g fill="url(#blockFill)" stroke="#aaa" strokeWidth="2.4">
        <rect x="394" y="139" width="102" height="61" />
        <rect x="656" y="67" width="197" height="205" />
        <rect x="1054" y="139" width="91" height="61" />
      </g>
      <g fill="none" stroke="#b5b5b5" strokeWidth="2" strokeDasharray="3 7">
        <path d="M690 160H820M710 130H800M730 190H810M780 120V200" />
      </g>
      <g fill="#111">
        <rect x="340" y="145" width="6" height="50" />
        <rect x="545" y="121" width="10" height="96" />
        <rect x="959" y="99" width="20" height="142" />
        <rect x="1220" y="150" width="6" height="38" />
        <circle cx="325" cy="155" r="3" />
        <circle cx="310" cy="185" r="3" />
        <circle cx="298" cy="226" r="3" />
        <circle cx="591" cy="127" r="3" />
        <circle cx="580" cy="150" r="3" />
        <circle cx="568" cy="170" r="3" />
      </g>
      <g fill="#fff" stroke="#999" strokeWidth="2">
        <path d="M787 286l30 14-30 14z" />
        <path d="M787 318l30 14-30 14z" />
        <path d="M787 352l30 15-30 15z" />
        <rect x="862" y="312" width="31" height="36" />
        <rect x="867" y="319" width="21" height="15" rx="2" />
      </g>
      <rect x="1344" y="126" width="122" height="101" fill="#fff" stroke="#71b5e6" strokeWidth="6" />
      <rect x="1363" y="142" width="85" height="42" rx="5" fill="#fff" stroke="#666" strokeWidth="2.4" />
      <g fontFamily={ARIAL} fontSize="9" fill="#777" textAnchor="middle">
        <text x="261" y="158">0.300</text>
        <text x="261" y="188">0.160</text>
        <text x="261" y="229">0.121</text>
        <text x="480" y="173">Config</text>
        <text x="1072" y="173">Config</text>
        <text x="1128" y="173">mass</text>
      </g>
    </svg>
  )
}

/* Mechanics Explorer view. Root coordinates are 3x from x=940, y=170. */
const FLOOR = '#8b91aa'
const SLAB = '#9095ad'
const SHADE = '#7b8095'
const DARK = '#33353d'
const EDGE = '#4c4f60'
const SKY = '#98988f'

const GripperSide = () => (
  <g transform="translate(405 390)">
    <path d="M445 100L590 80C605 110 612 130 615 150V250L560 222L490 215Z" fill={SHADE} />
    <path d="M165 -8L290 30C330 40 370 70 392 95L445 100L590 80C575 40 545 15 520 -8Z" fill={SLAB} />
    <path d="M290 30C330 40 370 70 392 95L296 112Z" fill={SKY} />
    <path d="M175 3L287 28L297 108L250 108L190 128Z" fill={DARK} />
    <path d="M418 62C440 35 490 32 525 45" fill="none" stroke="#6f7489" strokeWidth="3" />

    <path d="M60 205L145 170L175 265L80 270Z" fill="#858aa2" />
    <path d="M147 190L180 150L202 225L172 263Z" fill={DARK} />
    <path d="M85 165L125 148L130 165L75 195Z" fill={DARK} />
    <ellipse cx="188" cy="180" rx="13" ry="36" fill="none" stroke="#b4b8c8" strokeWidth="6" transform="rotate(12 188 180)" />
    <path d="M225 105L268 90L258 120L285 125L245 175L205 170Z" fill="#5b5e70" />
    <path d="M290 130L400 105L480 120L430 135L330 170Z" fill={SLAB} />
    <path d="M205 205L290 130L345 130L270 205L225 220Z" fill="#74798e" />
    <g stroke={DARK} strokeWidth="3" strokeDasharray="3 8">
      <path d="M210 190L340 125M235 210L355 140M245 230L300 195M300 225L350 245" />
    </g>
    <path d="M365 150L430 118L480 125L495 235L450 290L365 275Z" fill="#8d92a9" />
    <path d="M432 132L478 124L495 235L450 288Z" fill={DARK} />
    <path d="M390 160L405 210" stroke={DARK} strokeWidth="5" />
    <circle cx="55" cy="182" r="14" fill="#9499af" stroke={EDGE} strokeWidth="3" />
    <circle cx="32" cy="238" r="13" fill="#a4a8bc" stroke={EDGE} strokeWidth="3" />

    <path d="M165 445C330 420 480 320 560 224L590 430C480 530 310 615 195 652Z" fill={FLOOR} />
    <path d="M400 358C460 315 520 270 560 224L585 432L405 426Z" fill={SHADE} />
    <path d="M90 380L165 442L195 652L115 576Z" fill={SHADE} />
    <path d="M165 445C330 420 480 320 560 224" fill="none" stroke={EDGE} strokeWidth="4" />
    <path d="M560 224L588 432" fill="none" stroke={EDGE} strokeWidth="3" />
    <path d="M192 650C310 615 490 530 590 432" fill="none" stroke={EDGE} strokeWidth="4" />
    <path d="M147 380L232 350L285 380M188 585L262 560L315 590M438 447L525 456" fill="none" stroke="#5f6275" strokeWidth="2.5" />
    <path d="M388 488L437 447" stroke={DARK} strokeWidth="3" />
    <path d="M615 455V482L395 658H365Z" fill={DARK} />
  </g>
)

const RobotSide = () => (
  <g transform="translate(45 240)">
    <path d="M325 5L355 222L300 262L230 330L115 235L90 225L205 95Z" fill={DARK} />
    <path d="M12 245L325 2L326 12L40 236L12 265Z" fill="#a4a8bc" />
    <path d="M12 262L48 250L60 290L12 300Z" fill={DARK} />
    <path d="M185 48L225 40L375 305V345L235 125Z" fill="#8f94aa" stroke={EDGE} strokeWidth="2" />
    <path d="M190 45L205 70L75 238L35 236Z" fill="#9ba0b3" stroke={EDGE} strokeWidth="2" />
    <circle cx="207" cy="42" r="20" fill="#8f94aa" stroke={EDGE} strokeWidth="2" />
    <circle cx="197" cy="52" r="6" fill="#e0e2e9" />
    <ellipse cx="250" cy="135" rx="14" ry="10" fill="#6e7388" stroke={EDGE} strokeWidth="2" />
    <path d="M120 192L116 212M148 168L144 184M174 146L170 160M292 230L285 252" stroke="#dfe1e8" strokeWidth="5" />
    <circle cx="55" cy="238" r="15" fill="#9ba0b3" stroke={EDGE} strokeWidth="3" />

    <path d="M195 300L232 288L228 380L195 395Z" fill={DARK} />
    <circle cx="118" cy="305" r="72" fill="none" stroke={EDGE} strokeWidth="16" strokeDasharray="5 6" />
    <circle cx="118" cy="305" r="64" fill="#9a9fb3" />
    <circle cx="92" cy="305" r="48" fill="none" stroke={EDGE} strokeWidth="8" strokeDasharray="4 5" />
    <path d="M15 310L60 300L150 320L155 395L60 400L20 350Z" fill="#9095ad" stroke={EDGE} strokeWidth="2" />
    <path d="M57 365L85 368M110 368L140 371" stroke="#e4e5ea" strokeWidth="4" />
    <path d="M48 345L85 330L100 345M120 330L150 345" fill="none" stroke="#dfe1e8" strokeWidth="3" />
    <path d="M20 408L90 398L118 430L115 500L50 495L25 470Z" fill="#8f94aa" stroke={EDGE} strokeWidth="3" />
    <path d="M115 408L152 395L156 460L118 492Z" fill={DARK} />

    <path d="M160 420C200 410 215 430 215 450L200 490L165 470Z" fill="#a1a5b9" stroke={EDGE} strokeWidth="2" />
    <path d="M160 412L240 420" stroke="#d8dae2" strokeWidth="7" />
    <path d="M252 385L285 383L282 400L255 408Z" fill="#a4a8bc" stroke={EDGE} strokeWidth="2" />
    <path d="M245 322L275 325" stroke="#6f7489" strokeWidth="2" />

    <ellipse cx="165" cy="508" rx="88" ry="26" fill="#7f8498" stroke={EDGE} strokeWidth="2" />
    <path d="M120 488H215" stroke={EDGE} strokeWidth="6" strokeDasharray="4 5" />
    <path d="M100 510C150 540 210 530 250 490V515C210 555 150 560 110 535Z" fill="#696d81" />
    <path d="M225 480L268 460L270 525L235 548Z" fill={DARK} />
    <path d="M180 550L240 520L280 585L225 610Z" fill="#6d7185" stroke={DARK} strokeWidth="3" />
    <path d="M205 560L245 535M220 585L262 560" stroke="#a4a8bc" strokeWidth="5" />
    <path d="M105 665C210 668 300 640 318 575" fill="none" stroke={EDGE} strokeWidth="6" />
    <path d="M60 650C120 670 200 665 230 650V640C180 650 110 655 60 640Z" fill="#9499af" />

    <path d="M55 518L115 508L122 545L60 552Z" fill="#8d92a9" stroke={EDGE} strokeWidth="2" />
    <path d="M25 565L120 550V630L35 625Z" fill="#8a8fa6" />
    <path d="M115 556L155 530L160 592L120 630Z" fill={DARK} />
    <path d="M190 652L205 572L226 640L238 807H205Z" fill={DARK} />
    <path d="M12 660L65 655L78 765L35 807H12Z" fill={DARK} />

    <path d="M88 703V660" stroke="#1a2fc4" strokeWidth="6" />
    <path d="M88 703H135" stroke="#19c43a" strokeWidth="5" />
    <path d="M88 703L66 725" stroke="#c41a1a" strokeWidth="7" />
    <text x="89" y="654" fontSize="20" fontFamily={ARIAL} fill="#3a46c9" textAnchor="middle">Z</text>
    <text x="146" y="707" fontSize="18" fontFamily={ARIAL} fill="#19a63a" textAnchor="middle">Y</text>
  </g>
)

const MechanicsView = () => (
  <svg width="635" height="339" viewBox="-885 30 1905 1017">
    <defs>
      <linearGradient id="sky" x1="0" y1="0" x2="1" y2="0">
        <stop offset="0.45" stopColor="#8e8e8e" />
        <stop offset="0.6" stopColor="#9a9a97" />
        <stop offset="1" stopColor="#96968f" />
      </linearGradient>
      <linearGradient id="cyl" x1="0" y1="0" x2="1" y2="0">
        <stop offset="0" stopColor="#7f8498" />
        <stop offset="0.45" stopColor="#a0a5bb" />
        <stop offset="1" stopColor="#7d8296" />
      </linearGradient>
    </defs>
    <rect x="-885" y="30" width="1905" height="1017" fill="url(#sky)" />
    <path d="M20 190L368 238L400 465L560 490L1020 640V845L770 1047H0V500Z" fill={FLOOR} />
    <GripperSide />
    <path d="M640 232V340C650 385 745 385 750 345V232Z" fill="url(#cyl)" />
    <ellipse cx="688" cy="232" rx="49" ry="21" fill="#9fa4b9" />
    <RobotSide />
  </svg>
)

/* Scope chart */

interface ScopeAxes {
  top: number
  bottom: number
  ticks: { y: number; label: string }[]
  traces: { y: number; color: string; width?: number }[]
}

interface ScopeChartProps {
  width: number
  height: number
  left: number
  right: number
  vlines: number[]
  labelY: number
  tickSize: number
  axes: ScopeAxes[]
}

const ScopeChart = ({ width, height, left, right, vlines, labelY, tickSize, axes }: ScopeChartProps) => (
  <ChartSvg width={width} height={height}>
    <rect width={width} height={height} fill="#1f1f1f" />
    {axes.map(a => (
      <g key={a.top}>
        <rect x={left + 0.5} y={a.top + 0.5} width={right - left} height={a.bottom - a.top} fill="#000" stroke="#9a9a9a" />
        {a.ticks.map(t => (
          <g key={t.label}>
            <path d={`M${left} ${t.y + 0.5}H${right}`} stroke="#4a4a4a" />
            <text x={left - 1} y={t.y + 4} textAnchor="end" fontSize={tickSize} fontFamily={ARIAL} fill="#9c9c9c">{t.label}</text>
          </g>
        ))}
        {vlines.map(x => (
          <path key={x} d={`M${x + 0.5} ${a.top}V${a.bottom}`} stroke="#5c5c5c" />
        ))}
        {a.traces.map(t => (
          <path key={t.y} d={`M${left} ${t.y + 0.5}H${right}`} stroke={t.color} strokeWidth={t.width ?? 1} />
        ))}
      </g>
    ))}
    {[left, ...vlines, right].map((x, i) => (
      <text key={x} x={x} y={labelY} textAnchor="middle" fontSize="10" fontFamily={ARIAL} fill="#8c8c8c">{i * 2}</text>
    ))}
    <rect x={right - 6} y="3" width="11" height="7" fill="#e6e6e6" />
    <path d={`M${right - 3} 7l2.5-3 2.5 3z`} fill="#333" />
  </ChartSvg>
)

const ScopeToolbar = () => (
  <ScopeTools>
    <ScopeGear />
    <Caret $size={2} />
    <ScopeDivider />
    <StepBackIcon size={16} />
    <PlayGreen size={16} />
    <StepFwdIcon size={16} color="#7fb0dc" edge="#5a8fbf" />
    <StopIcon size={16} />
    <ScopeDivider />
    <BlocksIcon />
    <Caret $size={2} />
    <ScopeDivider />
    <ZoomIcon />
    <Caret $size={2} />
    <ScopeDivider />
    <FitIcon />
    <Caret $size={2} />
    <ScopeDivider />
    <StyleIcon />
    <EditIcon />
    <Caret $size={2} />
  </ScopeTools>
)

interface ScopeProps {
  name: string
  left: number
  top: number
  width: number
  active: boolean
  chart: ScopeChartProps
  sampleWidth: number
  timeWidth: number
}

const Scope = ({ name, left, top, width, active, chart, sampleWidth, timeWidth }: ScopeProps) => (
  <ScopeWindow $left={left} $top={top} $width={width}>
    <ScopeTitle $active={active}>
      <MatlabLogo size={15} />
      <TitleText>{name}</TitleText>
      <WinControls $gap={27} $color={active ? '#333' : '#aaa'}>
        <Minimize />
        <Maximize />
        <CloseX />
      </WinControls>
    </ScopeTitle>
    <ScopeMenu>
      <span>File</span>
      <span>Tools</span>
      <span>View</span>
      <span>Simulation</span>
      <span>Help</span>
      <MenuSpacer>↴</MenuSpacer>
    </ScopeMenu>
    <ScopeToolbar />
    <ScopeChart {...chart} />
    <ScopeStatus>
      <StatusLabel>Ready</StatusLabel>
      <StatusCell $width={sampleWidth}>Sample based</StatusCell>
      <StatusCell $width={timeWidth}>T=10.000</StatusCell>
    </ScopeStatus>
  </ScopeWindow>
)

const YELLOW = '#a3a33a'

const angleChart: ScopeChartProps = {
  width: 306,
  height: 184,
  left: 20,
  right: 294,
  vlines: [75, 129, 184, 239],
  labelY: 179,
  tickSize: 9.4,
  axes: [
    { top: 7, bottom: 52, ticks: [{ y: 17, label: '-100' }, { y: 39, label: '-200' }], traces: [{ y: 29, color: YELLOW }] },
    { top: 69, bottom: 113, ticks: [{ y: 79, label: '-100' }, { y: 101, label: '-200' }], traces: [{ y: 90, color: YELLOW }] },
    { top: 129, bottom: 164, ticks: [{ y: 136, label: '100' }, { y: 155, label: '90' }], traces: [{ y: 148, color: YELLOW }] },
  ],
}

const positionChart: ScopeChartProps = {
  width: 320,
  height: 217,
  left: 27,
  right: 309,
  vlines: [83, 140, 196, 253],
  labelY: 213,
  tickSize: 9,
  axes: [
    {
      top: 7,
      bottom: 61,
      ticks: [{ y: 14, label: '-0.025' }, { y: 27, label: '-0.03' }, { y: 41, label: '-0.035' }, { y: 54, label: '-0.04' }],
      traces: [{ y: 35, color: YELLOW }],
    },
    {
      top: 79,
      bottom: 136,
      ticks: [{ y: 86, label: '-0.025' }, { y: 100, label: '-0.03' }, { y: 114, label: '-0.035' }, { y: 127, label: '-0.04' }],
      traces: [{ y: 108, color: '#7d7d2c', width: 2 }],
    },
    {
      top: 152,
      bottom: 199,
      ticks: [{ y: 160, label: '0.25' }, { y: 170, label: '0.2' }, { y: 179, label: '0.15' }, { y: 188, label: '0.1' }, { y: 197, label: '0.05' }],
      traces: [{ y: 171, color: '#3a8ed0', width: 1.5 }, { y: 181, color: '#5d9c48' }],
    },
  ],
}

const logLines = [
  'In inverseKinematics/solve (line 311)',
  'In inverseKinematics/stepImpl (line 159)',
  'In robotics.slmanip.internal.block/IKBlock/stepImpl (line 80)',
  'Warning: The provided robot configuration violates the predefined joint limits.',
  '> In robotics.manip.internal.warning (line 19)',
  'In robotics.manip.internal/RigidBodyTree/validateConfigurationWithLimits (line 1613)',
  'In inverseKinematics/solve (line 311)',
  'In inverseKinematics/stepImpl (line 159)',
  'In robotics.slmanip.internal.block/IKBlock/stepImpl (line 80)',
  'Warning: The provided robot configuration violates the predefined joint limits.',
]

const SimulinkWindow = () => (
  <AppWindow $left={0} $width={645}>
    <TitleBar $padRight={15}>
      <SimulinkLogo />
      <TitleText>simulation6_5 * - Simulink</TitleText>
      <WinControls $gap={27}>
        <Minimize />
        <Maximize />
        <CloseX />
      </WinControls>
    </TitleBar>
    <TabBar $padLeft={3}>
      <RibbonTab $kind="active">SIMULATION</RibbonTab>
      <RibbonTab>DEBUG</RibbonTab>
      <RibbonTab>MODELING</RibbonTab>
      <RibbonTab>FORMAT</RibbonTab>
      <RibbonTab>APPS</RibbonTab>
      <RibbonTab $kind="context">SCOPE</RibbonTab>
      <QuickAccess $left={26} $width={80}>
        <QuickSave />
        <QuickUndo />
        <DotsGlyph>•••</DotsGlyph>
      </QuickAccess>
    </TabBar>
    <Ribbon>
      <RibbonSection $width={118}>
        <SectionBody>
          <NewButton>
            <PlusIcon />
            <NewLabel>New</NewLabel>
            <Caret />
          </NewButton>
          <FileList>
            <FileRow><FolderIcon /><span>Open</span><Caret /></FileRow>
            <FileRow><SaveIcon /><span>Save</span><Caret /></FileRow>
            <FileRow><PrintIcon /><span>Print</span><Caret /></FileRow>
          </FileList>
        </SectionBody>
        <SectionLabel>FILE</SectionLabel>
      </RibbonSection>
      <RibbonSection $width={46}>
        <Collapsed>LIBRARY<Caret $size={5} /></Collapsed>
      </RibbonSection>
      <RibbonSection $width={48}>
        <Collapsed>PREPARE<Caret $size={5} /></Collapsed>
      </RibbonSection>
      <RibbonSection $width={307}>
        <SectionBody>
          <RunColumn>
            <StopTimeRow>Stop Time<StopInput>10.0</StopInput></StopTimeRow>
            <ModeSelect>Normal<Caret /></ModeSelect>
            <FastRestart><RestartIcon />Fast Restart</FastRestart>
          </RunColumn>
          <BigButton $width={44} $left={7}>
            <StepBackIcon />
            Step<Inline>Back <Caret /></Inline>
          </BigButton>
          <BigButton $width={46} $left={3}>
            <PlayGreen />
            Run
            <Caret $top={5} />
          </BigButton>
          <BigButton $width={50} $left={2}>
            <StepFwdIcon />
            Step<span>Forward</span>
          </BigButton>
          <BigButton $width={40} $muted>
            <StopIcon />
            Stop
          </BigButton>
        </SectionBody>
        <SectionLabel>SIMULATE</SectionLabel>
      </RibbonSection>
      <RibbonSection $width={81}>
        <Collapsed>REVIEW RESULTS<Caret $size={5} /></Collapsed>
      </RibbonSection>
    </Ribbon>
    <SimMain>
      <SideStrip>
        <VerticalTab $width={16} $height={60} $flip>Model Browser</VerticalTab>
      </SideStrip>
      <Center>
        <EditorTabs>
          <NavArrow dir="left" />
          <NavArrow dir="right" />
          <NavArrow dir="up" />
          <EditorTab>simulation6_5</EditorTab>
          <ToolDot color="#ddd" width={16} />
          <KeyboardSlot />
        </EditorTabs>
        <EditorRow>
          <Palette>
            <CircleBack />
            <PaletteGroup>
              <PalZoom />
              <PalFit />
              <PalRoute />
              <PalText />
              <PalImage />
              <PalBox />
            </PaletteGroup>
            <PaletteBottom>
              <PalCamera />
              <PalTable />
              <PalMore />
            </PaletteBottom>
          </Palette>
          <EditorColumn>
            <AddressBar>
              <SimulinkLogo size={13} />
              simulation6_5
              <AddressArrow>▶</AddressArrow>
              <Caret $size={4} $color="#111" />
            </AddressBar>
            <Hint>
              <InfoIcon />
              <HintBody>
                To create a connection, click a port, terminator, or line segment, and then click a compatible,<br />
                highlighted model element. <HintLink>More information.</HintLink><HintLink>Do not show again</HintLink>
              </HintBody>
              <CloseBox>×</CloseBox>
            </Hint>
            <CanvasArea>
              <BlockDiagram />
              <CanvasScroll />
            </CanvasArea>
          </EditorColumn>
        </EditorRow>
        <Diagnostic>
          <DiagHeader>
            Diagnostic Viewer
            <Inline $gap={6}><CircleDown /><DismissGlyph>×</DismissGlyph></Inline>
          </DiagHeader>
          <DiagTools>
            <span>12:11 PM: Simulation</span>
            <TimeSpacer />
            <Caret />
            <ToolDivider />
            <Badge fill="#c9322c" glyph="!" /><Count>0</Count>
            <WarnBadge /><Count>0</Count>
            <Badge fill="#2678c9" glyph="i" /><Count>1</Count>
            <ToolDivider />
            <KebabIcon />
          </DiagTools>
          <LogBox>
            <LogStripe />
            <LogLines>{logLines.join('\n')}</LogLines>
            <LogScroll>
              ▲
              <LogThumb />
              ▼
            </LogScroll>
          </LogBox>
        </Diagnostic>
      </Center>
      <PropertyStrip>
        <VerticalTab $width={14} $height={85}>Property Inspector</VerticalTab>
      </PropertyStrip>
    </SimMain>
    <StatusBar>
      Ready
      <StatusItem $left={283} $link>View diagnostics</StatusItem>
      <StatusItem $left={73}>40%</StatusItem>
      <StatusItem $left={89} $link>auto(ode45)</StatusItem>
    </StatusBar>
  </AppWindow>
)

const MatlabWindow = () => (
  <AppWindow $left={644} $width={636}>
    <TitleBar $padRight={7}>
      <MatlabLogo />
      <TitleText>MATLAB R2022b</TitleText>
      <WinControls $gap={27}>
        <Minimize />
        <Maximize />
        <CloseX />
      </WinControls>
    </TitleBar>
    <TabBar $padLeft={0}>
      <MatTab $width={18}>H</MatTab>
      <MatTab $width={60}>P</MatTab>
      <MatTab $width={39} $inset={14}>A</MatTab>
      <MatTab $width={57} $kind="active">MECH</MatTab>
      <MatTab $width={39} $inset={14} $kind="context">V</MatTab>
      <QuickAccess $left={12} $width={188}>
        <QuickSave color="#7f9fbc" paper="#6c90b2" />
        <QuickCut />
        <QuickSave color="#7f9fbc" paper="#6c90b2" />
        <QuickSave color="#7f9fbc" paper="#6c90b2" />
        <QuickUndo color="#7f9fbc" />
        <QuickUndo color="#7f9fbc" flip />
        <QuickStack />
        <Badge fill="#f2f5f8" glyph="?" ink="#24456b" />
        <CircleDown color="#2c4c6c" />
      </QuickAccess>
      <SearchBox>Search Documentation<Glass /></SearchBox>
      <UserArea><Bell /><Inline>yassa <Caret $color="#fff" /></Inline></UserArea>
    </TabBar>
    <MatRibbon>
      <ViewRow>
        <ToolDot color="#dfe7ef" />
        <ViewDownIcon />
        <ToolDivider $margin={2} />
        View convention:
        <ViewSelect><Caret /></ViewSelect>
        <ToolDivider $margin={2} />
        <CubeIcon />
        <ToolDivider $margin={1} />
        <PointerIcon />
        <OrbitIcon />
        <HandIcon />
        <MoveIcon />
        <ZoomIcon />
        <ViewBoxIcon />
        <ToolDivider $margin={2} />
        <AxesIcon />
        <SphereIcon />
        <ToolDivider $margin={2} />
        <RobotIcon />
      </ViewRow>
      <ToolbarsLabel>ND TOOLBARS</ToolbarsLabel>
    </MatRibbon>
    <PathRow><Caret $color="#111" /><Glass /></PathRow>
    <DocTabs>
      <DocName>der.m</DocName>
      <DocTitle>Mechanics Explorers - Mechanics Explorer-simulation6_5</DocTitle>
      <CircleDown />
      <DocClose>×</DocClose>
    </DocTabs>
    <ExplorerTabs>
      <ExplorerTab>rer-simulation6_5<span>×</span></ExplorerTab>
    </ExplorerTabs>
    <Scene><MechanicsView /></Scene>
    <PlayBar>
      <RoundBtn><MiniCircleBtn d="M2 1h2v9H2zM10 1v9L4 5.5z" /></RoundBtn>
      <RoundBtn><MiniCircleBtn d="M2 1h1.5v9H2zM9 1v9L4 5.5z" /></RoundBtn>
      <RoundBtn><MiniCircleBtn d="M3 1l7 4.5L3 10z" /></RoundBtn>
      <RoundBtn><MiniCircleBtn d="M2 1l6 4.5L2 10zM8 1h1.5v9H8z" fill="#444" /></RoundBtn>
      <TimeSlider><SliderLabel>T = [0,10]</SliderLabel><SliderHandle /></TimeSlider>
      <RoundBtn $after={0}><MiniCircleBtn d="M1 2h9v6H7l-1 2-1-2H1z" /></RoundBtn>
      <ToolDivider $height={24} />
      <RateLabel>1X</RateLabel>
      <RateGlyph width="22" height="16" viewBox="0 0 22 16">
        <path d="M2 7h3M8 15h7V1M15 7h3" stroke="#222" fill="none" />
      </RateGlyph>
      <ToolDivider $height={24} />
      <TimeLabel>Time</TimeLabel>
      <TimeInput>10</TimeInput>
    </PlayBar>
    <LowerRow>
      <Workspace>
        <VarTable>
          <VarRow><VarIcon kind="box" /><VarName>info68</VarName><VarValue $struct>1x1 rigidBodyTre...</VarValue></VarRow>
          <VarRow><VarIcon kind="struct" /><VarName>initialGuess</VarName><VarValue $struct>1x5 struct</VarValue></VarRow>
          <VarRow><VarIcon kind="grid" /><VarName>n</VarName><VarValue>1000</VarValue></VarRow>
        </VarTable>
      </Workspace>
      <CommandPane>
        <CommandHead><CircleDown /></CommandHead>
        <CommandText><em>ab3.mat'</em>)</CommandText>
      </CommandPane>
    </LowerRow>
    <MatStatus><Bars />-<ToolDivider /></MatStatus>
  </AppWindow>
)

export default function App(): JSX.Element {
  return (
    <Desktop>
      <GlobalStyle />
      <SimulinkWindow />
      <MatlabWindow />
      <Scope name="angle" left={640} top={40} width={306} active chart={angleChart} sampleWidth={60} timeWidth={47} />
      <Scope name="position" left={638} top={311} width={320} active={false} chart={positionChart} sampleWidth={63} timeWidth={44} />
    </Desktop>
  )
}
